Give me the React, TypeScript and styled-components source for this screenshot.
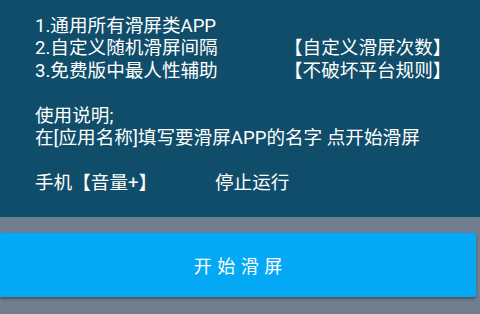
import React from 'react';
import styled, { createGlobalStyle } from 'styled-components';

const GlobalStyle = createGlobalStyle`
	html, body {
		margin: 0;
		padding: 0;
		background-color: #707f8f;
	}
	body {
		font-family: Roboto, 'Noto Sans CJK SC', sans-serif;
	}
`;

const Screen = styled.div`
	width: 480px;
	height: 314px;
	display: flex;
	flex-direction: column;
	background-color: #707f8f;
	overflow: hidden;
`;

const InfoPanel = styled.div`
	height: 217px;
	box-sizing: border-box;
	padding: 15px 0 0 35px;
	background-color: #0f4d6a;
	color: #ffffff;
	font-size: 18.6px;
	line-height: 22.4px;
`;

const Row = styled.div`
	display: flex;
	height: 22.4px;
	white-space: nowrap;
`;

const Cell = styled.span<{ $width?: number }>`
	width: ${({ $width }) => ($width ? `${$width}px` : 'auto')};
	flex-shrink: 0;
`;

const Spacer = styled.div`
	height: 22.4px;
`;

const ButtonArea = styled.div`
	display: flex;
	padding: 16px 4px 0 0;
`;

const StartButton = styled.button`
	flex: 1;
	height: 64px;
	border: none;
	border-radius: 0 2px 2px 0;
	background-color: #03a9f4;
	color: #ffffff;
	font-family: Roboto, 'Noto Sans CJK SC', sans-serif;
	font-size: 18px;
	letter-spacing: 5.5px;
	text-indent: 5.5px;
	box-shadow: 0 2px 3px rgba(0, 0, 0, 0.35);
`;

export default function App() {
	return (
		<>
			<GlobalStyle />
			<Screen>
				<InfoPanel>
					<Row>
						<Cell>1.通用所有滑屏类APP</Cell>
					</Row>
					<Row>
						<Cell $width={249}>2.自定义随机滑屏间隔</Cell>
						<Cell>【自定义滑屏次数】</Cell>
					</Row>
					<Row>
						<Cell $width={249}>3.免费版中最人性辅助</Cell>
						<Cell>【不破坏平台规则】</Cell>
					</Row>
					<Spacer />
					<Row>
						<Cell>使用说明;</Cell>
					</Row>
					<Row>
						<Cell>在[应用名称]填写要滑屏APP的名字 点开始滑屏</Cell>
					</Row>
					<Spacer />
					<Row>
						<Cell $width={180}>手机【音量+】</Cell>
						<Cell>停止运行</Cell>
					</Row>
				</InfoPanel>
				<ButtonArea>
					<StartButton>开始滑屏</StartButton>
				</ButtonArea>
			</Screen>
		</>
	);
}
